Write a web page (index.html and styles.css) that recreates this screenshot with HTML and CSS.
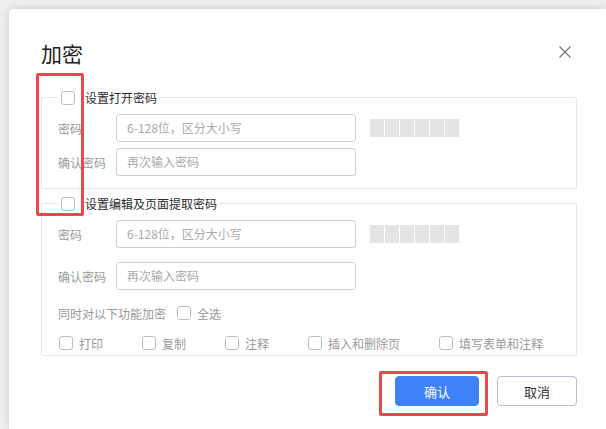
FILE: index.html
```html
<!DOCTYPE html>
<html lang="zh-CN">
<head>
<meta charset="utf-8">
<title>加密</title>
<link rel="stylesheet" href="styles.css">
</head>
<body>
<div class="dialog">
  <div class="inner">
    <div class="header">
      <h1 class="title">加密</h1>
      <span class="close" aria-label="关闭">
        <svg width="12" height="12" viewBox="0 0 12 12"><path d="M0.5 0.5 L11.5 11.5 M11.5 0.5 L0.5 11.5" stroke="#6f6f6f" stroke-width="1.1" fill="none"/></svg>
      </span>
    </div>

    <fieldset class="group g1">
      <legend class="legend"><span class="cb"></span><span class="legend-text">设置打开密码</span></legend>
      <div class="row">
        <span class="lbl">密码</span>
        <div class="input">6-128位，区分大小写</div>
        <div class="bars"><i></i><i></i><i></i><i></i><i></i><i></i></div>
      </div>
      <div class="row gap6">
        <span class="lbl">确认密码</span>
        <div class="input">再次输入密码</div>
      </div>
    </fieldset>

    <fieldset class="group g2">
      <legend class="legend"><span class="cb"></span><span class="legend-text">设置编辑及页面提取密码</span></legend>
      <div class="row">
        <span class="lbl">密码</span>
        <div class="input">6-128位，区分大小写</div>
        <div class="bars"><i></i><i></i><i></i><i></i><i></i><i></i></div>
      </div>
      <div class="row gap14">
        <span class="lbl">确认密码</span>
        <div class="input">再次输入密码</div>
      </div>
      <div class="line feat">
        <span class="muted">同时对以下功能加密</span>
        <span class="cb all"></span><span class="opt">全选</span>
      </div>
      <div class="line perms">
        <div class="perm w83"><span class="cb"></span><span class="opt">打印</span></div>
        <div class="perm w83"><span class="cb"></span><span class="opt">复制</span></div>
        <div class="perm w83"><span class="cb"></span><span class="opt">注释</span></div>
        <div class="perm w131"><span class="cb"></span><span class="opt">插入和删除页</span></div>
        <div class="perm"><span class="cb"></span><span class="opt">填写表单和注释</span></div>
      </div>
    </fieldset>

    <div class="actions">
      <button class="btn primary">确认</button>
      <button class="btn">取消</button>
    </div>
  </div>
</div>
<div class="mark mark1"></div>
<div class="mark mark2"></div>
</body>
</html>
```

FILE: styles.css
```css
html, body {
  margin: 0;
  padding: 0;
}
body {
  width: 606px;
  height: 429px;
  overflow: hidden;
  background: #efefef;
  font-family: "Noto Sans CJK SC", "Noto Sans", sans-serif;
  font-size: 12px;
  color: #333;
  position: relative;
}
.dialog {
  margin: 9px 0 0 9px;
  width: 597px;
  height: 420px;
  background: #fff;
  border-radius: 4px 0 0 0;
  box-shadow: 0 0 9px rgba(0, 0, 0, 0.16);
  padding-left: 32px;
  padding-top: 29px;
  box-sizing: border-box;
}
.inner {
  width: 536px;
}
.header {
  height: 30px;
  display: flex;
  align-items: center;
  justify-content: space-between;
}
.title {
  margin: 0;
  font-size: 21px;
  font-weight: normal;
  line-height: 30px;
  color: #222;
}
.close {
  width: 12px;
  height: 12px;
  margin-right: 6px;
  margin-top: -2px;
  display: flex;
}
.group {
  margin: 0;
  min-width: 0;
  border: 1px solid #e6e6e6;
  border-radius: 2px;
  padding: 8px 15px 12px 16px;
}
.g1 {
  margin-top: 21px;
}
.g2 {
  margin-top: 6px;
  padding-bottom: 2px;
}
.legend {
  display: flex;
  align-items: center;
  height: 17px;
  padding: 0 2px 0 3px;
  line-height: 17px;
}
.legend-text {
  margin-left: 10px;
  color: #2b2b2b;
}
.cb {
  display: inline-block;
  width: 14px;
  height: 14px;
  box-sizing: border-box;
  border: 1px solid #b7bfcc;
  border-radius: 3px;
  background: #fff;
  flex: none;
}
.row {
  display: flex;
  align-items: center;
  height: 28px;
}
.gap6 { margin-top: 6px; }
.gap14 { margin-top: 14px; }
.lbl {
  width: 58px;
  color: #9a9a9a;
  flex: none;
}
.input {
  width: 240px;
  height: 28px;
  box-sizing: border-box;
  border: 1px solid #cfcfcf;
  border-radius: 3px;
  padding-left: 10px;
  line-height: 26px;
  color: #aaa;
  flex: none;
}
.bars {
  display: flex;
  gap: 1px;
  margin-left: 14px;
}
.bars i {
  display: block;
  width: 14px;
  height: 18px;
  background: #e4e4e4;
}
.line {
  display: flex;
  align-items: center;
  height: 20px;
}
.feat { margin-top: 13px; }
.perms { margin-top: 10px; }
.muted { color: #9a9a9a; }
.cb.all { margin-left: 11px; }
.opt {
  margin-left: 6px;
  color: #9a9a9a;
}
.perm {
  display: flex;
  align-items: center;
}
.perm:first-child { margin-left: 1px; }
.w83 { width: 83px; }
.w131 { width: 131px; }
.actions {
  display: flex;
  justify-content: flex-end;
  gap: 18px;
  margin-top: 20px;
}
.btn {
  height: 30px;
  width: 80px;
  border: 1px solid #b9c0cb;
  border-radius: 4px;
  background: #fff;
  font-family: inherit;
  font-size: 13px;
  color: #333;
  padding: 0;
}
.btn.primary {
  width: 84px;
  background: #3f81f6;
  border-color: #3f81f6;
  color: #fff;
}
.mark {
  position: absolute;
  border: 3px solid #e84a4c;
  border-radius: 2px;
  box-sizing: border-box;
}
.mark1 {
  left: 36px;
  top: 73px;
  width: 48px;
  height: 143px;
}
.mark2 {
  left: 379px;
  top: 371px;
  width: 109px;
  height: 45px;
}
```
